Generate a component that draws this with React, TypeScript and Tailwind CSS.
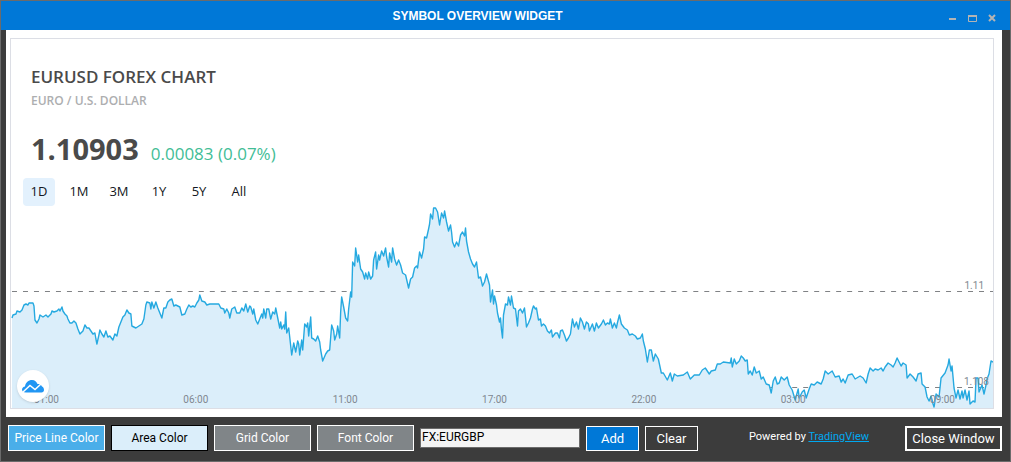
import { useState } from "react";

const ranges = ["1D", "1M", "3M", "1Y", "5Y", "All"];

const prices =
  "12,318 13,315 16,314 17,311 20,312 22,310 24,305 26,304 28,305 29,303 33,303 34,306 35,320 37,323 39,319 40,315 43,317 46,315 48,317 51,314 52,311 54,312 57,311 59,309 60,311 62,307 63,311 65,314 67,316 68,319 70,323 72,323 74,321 76,323 78,329 80,334 83,331 85,325 87,328 89,328 91,331 93,334 95,333 96,339 97,344 99,335 100,330 102,334 104,337 106,331 108,337 110,336 113,340 115,334 117,336 119,327 121,322 123,317 125,315 127,310 129,313 131,314 132,326 136,328 139,326 142,324 144,319 146,305 147,302 150,303 151,309 152,302 154,308 156,302 158,308 160,313 162,318 164,308 166,308 168,302 170,300 172,299 174,306 176,305 180,307 182,315 185,314 187,309 189,305 191,307 193,306 195,307 197,303 199,300 200,295 202,301 205,302 207,305 210,304 219,304 221,308 224,309 225,313 227,309 229,313 230,318 232,309 235,307 237,313 240,313 242,308 244,311 246,304 248,312 250,306 " +
  "251,307 253,314 254,309 256,320 258,324 260,319 262,314 263,318 264,309 266,318 267,309 269,309 271,319 273,312 275,314 276,308 278,318 280,328 281,322 282,329 284,325 285,329 286,312 287,333 289,328 290,337 292,355 294,343 296,352 298,341 299,344 300,355 302,340 303,350 305,324 307,327 308,323 309,336 311,317 312,338 314,339 316,341 318,336 320,342 321,350 323,361 326,354 328,351 330,350 332,325 334,331 335,340 337,334 338,326 340,338 341,312 342,297 344,307 346,318 348,321 349,309 351,292 352,297 353,262 355,266 356,248 357,255 358,262 359,255 361,269 363,272 365,279 366,273 368,279 369,272 371,279 373,276 374,260 376,252 377,269 379,255 380,260 382,251 384,256 386,248 387,257 389,267 390,253 392,262 393,248 395,259 397,265 399,260 401,265 403,273 406,275 409,288 411,279 413,277 415,268 417,266 418,268 420,252 422,258 424,249 425,237 427,238 429,229 430,224 431,214 433,219 434,208 436,208 438,212 440,225 442,213 444,218 445,211 447,222 449,231 451,225 452,232 453,242 455,247 457,242 459,246 461,235 463,232 465,236 466,228 467,241 469,252 471,259 473,264 475,267 477,262 479,278 481,277 483,286 485,282 487,274 " +
  "490,285 491,302 493,290 494,304 495,296 497,305 498,313 500,322 501,318 502,330 503,338 504,315 506,304 508,305 509,297 511,305 512,296 514,308 516,309 518,326 519,311 521,309 523,313 525,308 526,317 527,327 529,323 531,318 533,309 534,306 536,309 537,308 539,320 541,319 542,326 544,324 546,326 548,331 550,333 552,330 553,337 556,333 558,333 560,338 561,331 563,330 565,335 567,341 569,338 571,334 573,319 575,327 577,322 579,329 581,318 583,322 585,329 587,322 589,324 590,331 593,324 595,331 597,323 599,328 602,324 604,320 606,325 608,323 610,324 611,319 613,328 615,323 617,328 618,323 620,315 622,324 625,328 628,330 630,335 633,334 636,336 638,339 641,338 643,334 644,341 646,349 648,362 650,350 652,350 654,361 656,354 659,359 662,373 664,373 668,380 671,373 673,381 675,374 678,376 684,375 688,372 691,379 695,375 700,375 703,370 706,368 710,374 712,371 716,370 718,364 721,364 " +
  "724,362 731,363 732,358 733,367 735,359 737,364 740,361 742,356 744,358 746,361 748,360 749,374 751,371 753,375 755,367 757,373 760,371 762,379 764,377 767,384 770,385 772,393 774,381 776,377 778,384 780,383 782,377 785,380 788,377 790,385 793,390 796,400 799,389 800,398 803,392 805,390 807,398 810,389 812,384 815,385 818,382 822,384 824,379 826,371 829,374 833,371 836,377 840,376 842,382 844,379 846,383 849,375 853,374 856,379 861,376 864,378 867,383 869,374 871,368 874,371 876,369 879,370 882,368 884,371 886,367 889,363 892,365 894,367 896,363 898,358 900,362 902,366 904,363 907,365 908,378 911,374 914,377 917,381 919,374 922,373 923,384 926,387 928,397 930,401 932,396 934,404 935,407 937,394 940,397 942,378 946,373 949,365 950,359 952,371 953,366 955,388 957,398 959,390 961,399 963,391 964,398 966,390 968,400 970,391 971,404 974,401 976,402 977,378 979,378 980,392 983,385 985,394 987,385 988,379 990,374 992,361 994,362";

function PriceChart() {
  return (
    <svg
      className="absolute inset-0 h-full w-full"
      viewBox="11 39 983 369"
      preserveAspectRatio="none"
      aria-hidden="true"
    >
      <g stroke="#808285" strokeDasharray="5 6">
        <path d="M12 291.5H994" />
        <path d="M12 387.5H994" />
      </g>
      <polygon points={`12,408 ${prices} 994,408`} fill="#dbeefa" />
      <polyline
        points={prices}
        fill="none"
        stroke="#25a9e0"
        strokeWidth="1.4"
        strokeLinejoin="round"
      />
    </svg>
  );
}

function ColorButton({ label, className }: { label: string; className: string }) {
  return (
    <button className={`h-[26px] w-[97px] border text-[12px] ${className}`}>
      {label}
    </button>
  );
}

export default function App() {
  const [range, setRange] = useState("1D");
  const [symbol, setSymbol] = useState("FX:EURGBP");

  return (
    <div className="flex min-h-screen flex-col border border-[#6b6b6b] bg-[#3c3c3c] font-['Roboto',sans-serif] text-white">
      <header className="flex h-[29px] items-center bg-[#0078d7]">
        <h1 className="flex-1 pl-2 text-center font-['Liberation_Sans',sans-serif] text-[12px] font-bold">
          SYMBOL OVERVIEW WIDGET
        </h1>
        <div className="flex items-center gap-2 pr-3 pt-1 text-[#b4b4b4]">
          <button aria-label="Minimize">
            <svg className="h-3 w-3" viewBox="0 0 12 12">
              <path d="M3 7H10" stroke="currentColor" strokeWidth="2" />
            </svg>
          </button>
          <button aria-label="Maximize">
            <svg className="h-3 w-3" viewBox="0 0 12 12" fill="none" stroke="currentColor">
              <path d="M2.5 3V9.5H10.5V3" />
              <path d="M2 4H11" strokeWidth="2" />
            </svg>
          </button>
          <button aria-label="Close">
            <svg className="h-3 w-3" viewBox="0 0 12 12">
              <path d="M3 3L9 9M9 3L3 9" stroke="currentColor" strokeWidth="2" />
            </svg>
          </button>
        </div>
      </header>

      <main className="ml-[5px] mr-2 flex flex-1 flex-col bg-white pb-2 pl-1 pr-2 pt-2 font-['Open_Sans',sans-serif]">
        <section className="relative flex flex-1 flex-col border border-[#dcdee5]">
          <PriceChart />
          <div className="relative flex flex-1 flex-col pl-5 pt-[26px] text-[#4a4a4a]">
            <h2 className="text-[17px] font-semibold leading-6">EURUSD FOREX CHART</h2>
            <p className="text-[12px] font-semibold leading-6 text-[#adaeb0]">
              EURO / U.S. DOLLAR
            </p>
            <p className="mt-4 flex items-baseline gap-3 leading-10">
              <span className="text-[29px] font-bold">1.10903</span>
              <span className="text-[17px] text-[#42bd96]">0.00083 (0.07%)</span>
            </p>
            <div className="-ml-2 mt-1 flex gap-2">
              {ranges.map((r) => (
                <button
                  key={r}
                  onClick={() => setRange(r)}
                  className={`h-7 w-8 rounded text-[13px] text-[#131722] ${r === range ? "bg-[#e3f1fd]" : ""}`}
                >
                  {r}
                </button>
              ))}
            </div>
          </div>

          <div className="relative flex justify-between pb-[2px] pl-[23px] pr-[38px] font-['Roboto',sans-serif] text-[10px] leading-3 text-[#808790]">
            <span>01:00</span>
            <span>06:00</span>
            <span>11:00</span>
            <span>17:00</span>
            <span>22:00</span>
            <span>03:00</span>
            <span>09:00</span>
          </div>
          <span className="absolute right-[9px] top-[241px] font-['Roboto',sans-serif] text-[10px] leading-3 text-[#808790]">
            1.11
          </span>
          <span className="absolute bottom-[20px] right-1 font-['Roboto',sans-serif] text-[10px] leading-3 text-[#808790]">
            1.108
          </span>
          <a
            href="#tradingview"
            aria-label="TradingView"
            className="absolute bottom-1.5 left-1.5 flex h-8 w-8 items-center justify-center rounded-full bg-white shadow"
          >
            <svg className="h-[13px] w-[22px]" viewBox="0 0 22 13">
              <path
                d="M4 12.5C1 12.5 0 11 0 9.5C0 8 1.5 6.5 3 6.5C3.5 2.5 6.5 0 10 0C13 0 14.5 2 15.5 4C18 3.5 19.5 5 20 6.5C21.5 7 22 8.5 22 10C22 11.5 21 12.5 19.5 12.5Z"
                fill="#2196f3"
              />
              <path
                d="M1 12L8 5.5L13 9.5L19 4"
                fill="none"
                stroke="#fff"
                strokeWidth="1.5"
              />
            </svg>
          </a>
        </section>
      </main>

      <footer className="flex h-11 items-start pl-[7px] pr-2 pt-2">
        <div className="flex gap-[6px]">
          <ColorButton label="Price Line Color" className="border-white bg-[#4aaee9]" />
          <ColorButton label="Area Color" className="border-black bg-[#dbeefa] text-black" />
          <ColorButton label="Grid Color" className="border-white bg-[#808588]" />
          <ColorButton label="Font Color" className="border-white bg-[#808588]" />
        </div>
        <input
          aria-label="Symbol"
          value={symbol}
          onChange={(e) => setSymbol(e.target.value)}
          className="ml-[6px] mt-[3px] h-5 w-40 border border-[#6b6b6b] bg-[#f4f4f4] px-px pb-[3px] text-[12px] text-black"
        />
        <button className="ml-[6px] mt-px h-[25px] w-[53px] border border-white bg-[#0078d7] pt-px text-[13px]">
          Add
        </button>
        <button className="ml-[6px] mt-px h-[25px] w-[53px] border border-white pt-px text-[13px]">
          Clear
        </button>
        <p className="ml-auto mr-9 mt-1 text-[11px] leading-4">
          Powered by{" "}
          <a href="#tradingview" className="text-[#00a8f0] underline">
            TradingView
          </a>
        </p>
        <button className="mt-px h-[25px] w-[97px] whitespace-nowrap border-2 border-white pt-px text-[13px]">
          Close Window
        </button>
      </footer>
    </div>
  );
}
